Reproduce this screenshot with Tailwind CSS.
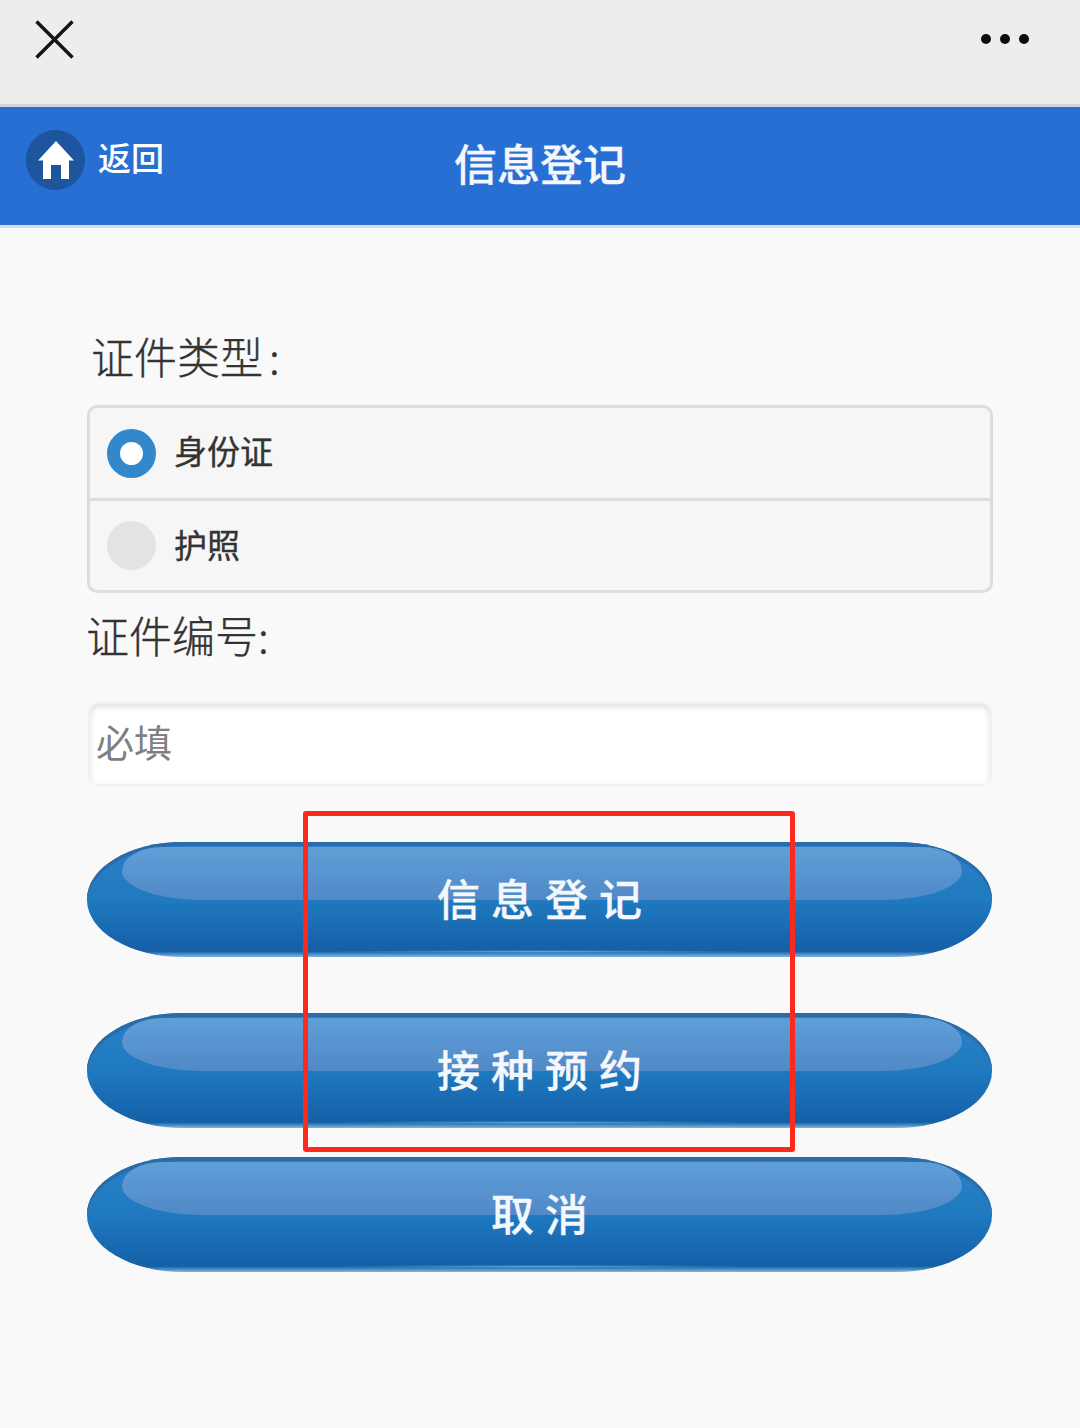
<!DOCTYPE html>
<html lang="zh">
<head>
<meta charset="utf-8">
<script src="https://cdn.jsdelivr.net/npm/@tailwindcss/browser@4"></script>
</head>
<body class="m-0">
<div class="relative w-[1080px] h-[1428px] overflow-hidden bg-[#f9f9f9] font-['Noto_Sans_CJK_SC','Noto_Sans',sans-serif]">
  <div class="h-[107px] bg-[#ededed] border-b-[3px] border-[#d0d4d8] flex items-start justify-between pl-[35px] pr-[51px]">
    <svg class="mt-[20px]" width="39" height="39" viewBox="0 0 39 39"><path d="M1.500 1.500L37.500 37.500M37.500 1.500L1.500 37.500" stroke="#151515" stroke-width="3.500" fill="none"/></svg>
    <div class="flex gap-[9px] mt-[34px]">
      <span class="w-[10px] h-[10px] rounded-full bg-[#0c0c0c]"></span>
      <span class="w-[10px] h-[10px] rounded-full bg-[#0c0c0c]"></span>
      <span class="w-[10px] h-[10px] rounded-full bg-[#0c0c0c]"></span>
    </div>
  </div>
  <div class="relative h-[121px] bg-[#276fd3] border-b-[3px] border-[#d8dde2] flex justify-center">
    <div class="absolute left-[26px] top-[23px] flex items-center gap-[13px]">
      <div class="w-[59px] h-[60px] rounded-full bg-[#1d559f] flex items-center justify-center">
        <svg width="40" height="40" viewBox="0 0 40 40"><path fill="#fff" d="M20 1L38 20.500H33V39H25V25H15V39H7V20.500H2Z"/></svg>
      </div>
      <span class="text-[33px] leading-[40px] text-white font-medium -mt-[7px]">返回</span>
    </div>
    <h1 class="text-[43px] leading-[60px] mt-[25px] text-[#f4f7fc] font-medium [-webkit-text-stroke:0.3px_#f4f7fc]">信息登记</h1>
  </div>
  <div class="px-[87px]">
    <div class="mt-[95px] ml-[4px] text-[43px] leading-[64px] text-[#333] font-light [-webkit-text-stroke:0.35px_#333]">证件类型<span class="ml-[6px] font-light">:</span></div>
    <div class="mt-[18px] w-[906px] rounded-[10px] border-[3px] border-[#ddd] bg-[#f6f6f6] text-[#333]">
      <div class="h-[93px] flex items-center pl-[17px] gap-[18px] border-b-[3px] border-[#ddd]">
        <span class="w-[49px] h-[49px] rounded-full bg-[#3388cc] flex items-center justify-center"><span class="w-[23px] h-[23px] rounded-full bg-white"></span></span>
        <span class="text-[33px] leading-[44px] font-normal -mt-[6px] [-webkit-text-stroke:0.35px_#333]">身份证</span>
      </div>
      <div class="h-[89px] flex items-center pl-[17px] gap-[18px]">
        <span class="w-[49px] h-[49px] rounded-full bg-[#e3e3e3]"></span>
        <span class="text-[33px] leading-[44px] font-normal -mt-[4px] [-webkit-text-stroke:0.35px_#333]">护照</span>
      </div>
    </div>
    <div class="mt-[9px] -ml-[1px] text-[43px] leading-[64px] text-[#333] font-light [-webkit-text-stroke:0.35px_#333]">证件编号<span class="font-light">:</span></div>
    <div class="mt-[36px] ml-[1px] w-[904px] h-[84px] rounded-[10px] bg-white border-2 border-[#f1f1f1] shadow-[inset_0_3px_6px_rgba(0,0,0,0.13)] flex items-center pl-[6px] pb-[8px] text-[38px] text-[#808080]">必填</div>
    <div class="relative mt-[56px] w-[905px] h-[115px] rounded-[96px/57px] overflow-hidden bg-[linear-gradient(#2d80c6,#1f7ac0_50%,#155fa6_95%,#7fb8e0)] shadow-[inset_0_4px_0_#2b6ca8] flex items-center justify-center pb-[6px]">
      <div class="absolute left-[35px] right-[30px] top-[5px] h-[53px] rounded-[40px_40px_80px_80px/24px_24px_29px_29px] bg-[linear-gradient(#5f9fd8,#5189c6)]"></div>
      <div class="absolute left-[240px] right-[240px] bottom-[4px] h-[3px] bg-[radial-gradient(ellipse_at_center,#5aa6dc,transparent_70%)]"></div>
      <span class="relative text-[43px] leading-[60px] font-medium text-[#f4f7fc] tracking-[11px] -mr-[11px] [-webkit-text-stroke:0.3px_#f4f7fc]">信息登记</span>
    </div>
    <div class="relative mt-[56px] w-[905px] h-[115px] rounded-[96px/57px] overflow-hidden bg-[linear-gradient(#2d80c6,#1f7ac0_50%,#155fa6_95%,#7fb8e0)] shadow-[inset_0_4px_0_#2b6ca8] flex items-center justify-center pb-[6px]">
      <div class="absolute left-[35px] right-[30px] top-[5px] h-[53px] rounded-[40px_40px_80px_80px/24px_24px_29px_29px] bg-[linear-gradient(#5f9fd8,#5189c6)]"></div>
      <div class="absolute left-[240px] right-[240px] bottom-[4px] h-[3px] bg-[radial-gradient(ellipse_at_center,#5aa6dc,transparent_70%)]"></div>
      <span class="relative text-[43px] leading-[60px] font-medium text-[#f4f7fc] tracking-[11px] -mr-[11px] [-webkit-text-stroke:0.3px_#f4f7fc]">接种预约</span>
    </div>
    <div class="relative mt-[29px] w-[905px] h-[115px] rounded-[96px/57px] overflow-hidden bg-[linear-gradient(#2d80c6,#1f7ac0_50%,#155fa6_95%,#7fb8e0)] shadow-[inset_0_4px_0_#2b6ca8] flex items-center justify-center pb-[6px]">
      <div class="absolute left-[35px] right-[30px] top-[5px] h-[53px] rounded-[40px_40px_80px_80px/24px_24px_29px_29px] bg-[linear-gradient(#5f9fd8,#5189c6)]"></div>
      <div class="absolute left-[240px] right-[240px] bottom-[4px] h-[3px] bg-[radial-gradient(ellipse_at_center,#5aa6dc,transparent_70%)]"></div>
      <span class="relative text-[43px] leading-[60px] font-medium text-[#f4f7fc] tracking-[11px] -mr-[11px] [-webkit-text-stroke:0.3px_#f4f7fc]">取消</span>
    </div>
  </div>
  <div class="absolute left-[303px] top-[811px] w-[492px] h-[341px] border-[5px] border-[#fb2a1c] rounded-[3px]"></div>
</div>
</body>
</html>
